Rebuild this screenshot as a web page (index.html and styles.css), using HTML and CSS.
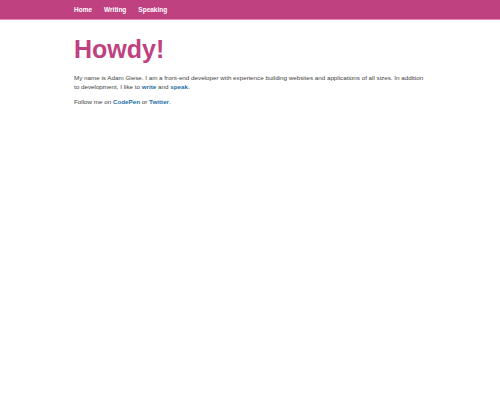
FILE: index.html
```html
<!DOCTYPE html>
<html>
<head>
<meta charset="utf-8">
<link rel="stylesheet" href="styles.css">
</head>
<body>
<header class="navbar">
  <nav class="nav">
    <a href="#" class="nav-link">Home</a>
    <a href="#" class="nav-link">Writing</a>
    <a href="#" class="nav-link">Speaking</a>
  </nav>
</header>
<main class="content">
  <h1 class="title">Howdy!</h1>
  <p class="text">My name is Adam Giese. I am a front-end developer with experience building websites and applications of all sizes. In addition to development, I like to <a href="#" class="link">write</a> and <a href="#" class="link">speak</a>.</p>
  <p class="text">Follow me on <a href="#" class="link">CodePen</a> or <a href="#" class="link">Twitter</a>.</p>
</main>
</body>
</html>
```
FILE: styles.css
```css
html, body {
  margin: 0;
  padding: 0;
  background: #ffffff;
  font-family: "Liberation Sans", Arial, sans-serif;
}
.navbar {
  background: #c0417f;
  height: 19px;
  border-bottom: 1px solid #e48bb6;
}
.nav {
  width: 352px;
  margin: 0 auto;
  display: flex;
  align-items: center;
  height: 19px;
  gap: 12px;
}
.nav-link {
  color: #ffffff;
  font-weight: bold;
  font-size: 6.5px;
  text-decoration: none;
}
.content {
  width: 352px;
  margin: 0 auto;
}
.title {
  margin: 15px 0 9px;
  font-size: 25px;
  line-height: 29px;
  font-weight: bold;
  color: #c0417f;
}
.text {
  margin: 0 0 6px;
  font-size: 6.25px;
  line-height: 9px;
  color: #444444;
}
.link {
  color: #1d6fa8;
  font-weight: bold;
  text-decoration: none;
}
```
